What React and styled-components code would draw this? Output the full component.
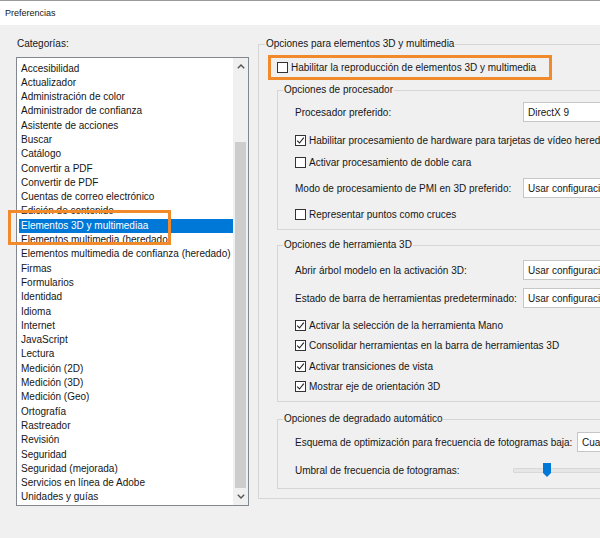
import React from "react";
import styled, { createGlobalStyle } from "styled-components";

const GlobalStyle = createGlobalStyle`
  html, body {
    margin: 0;
    padding: 0;
    background: #f0f0f0;
  }
  body {
    font-family: "Liberation Sans", Arial, sans-serif;
    font-size: 10px;
    color: #161616;
  }
`;

const Window = styled.div`
  width: 600px;
  height: 538px;
  overflow: hidden;
  display: flex;
  flex-direction: column;
  background: #f0f0f0;
`;

const TitleBar = styled.div`
  height: 25px;
  box-sizing: border-box;
  flex-shrink: 0;
  background: #fff;
  border-top: 1px solid #9a9a9a;
  padding-left: 5px;
  display: flex;
  align-items: center;
  font-size: 9px;
`;

const Content = styled.div`
  display: flex;
  align-items: flex-start;
  gap: 9px;
  padding: 12px 0 0 16px;
`;

const LeftColumn = styled.div`
  position: relative;
  width: 233px;
  flex-shrink: 0;
`;

const Caption = styled.div`
  line-height: 14px;
  padding-left: 1px;
`;

const ListBox = styled.div`
  margin-top: 6px;
  height: 449px;
  box-sizing: border-box;
  border: 1px solid #828790;
  background: #fff;
  display: flex;
`;

const Items = styled.ul`
  flex: 1;
  margin: 0;
  padding: 3.5px 0 0 2px;
  list-style: none;
  overflow: hidden;
`;

const Item = styled.li`
  height: 14.3px;
  line-height: 14.3px;
  padding-left: 2px;
  white-space: nowrap;
  background: ${(p) => (p.$selected ? "#0078d7" : "transparent")};
  color: ${(p) => (p.$selected ? "#fff" : "inherit")};
`;

const Scrollbar = styled.div`
  width: 15px;
  display: flex;
  flex-direction: column;
  background: #f0f0f0;
`;

const ArrowButton = styled.div`
  height: 17px;
  display: flex;
  align-items: center;
  justify-content: center;
`;

const Track = styled.div`
  flex: 1;
  display: flex;
  flex-direction: column;
  padding-top: 67px;
`;

const Thumb = styled.div`
  flex: 1;
  margin: 0 2px;
  background: #cdcdcd;
`;

const Annotation = styled.div`
  position: absolute;
  left: -8px;
  top: 173px;
  width: 163px;
  height: 35px;
  box-sizing: border-box;
  border: 3px solid #f08a2a;
  pointer-events: none;
`;

const RightColumn = styled.div`
  width: 440px;
  flex-shrink: 0;
`;

const Group = styled.fieldset`
  margin: ${(p) => p.$top || 0}px 0 0 0;
  padding: 0;
  min-width: 0;
  border: 1px solid #d5d5d5;
`;

const Legend = styled.legend`
  margin-left: ${(p) => p.$indent}px;
  padding: 0 1px;
  line-height: 14px;
  font-size: 10px;
`;

const GroupBody = styled.div`
  padding: ${(p) => p.$pad};
`;

const Highlight = styled.div`
  margin-left: -9px;
  width: 284px;
  height: 25px;
  box-sizing: border-box;
  border: 3px solid #f08a2a;
  display: flex;
  align-items: center;
  padding-left: 6px;
`;

const CheckRow = styled.label`
  display: flex;
  align-items: center;
  gap: 3px;
  height: 20px;
  margin-top: ${(p) => p.$top || 0}px;
  white-space: nowrap;
`;

const Box = styled.span`
  width: 11px;
  height: 11px;
  box-sizing: border-box;
  border: 1px solid #333;
  background: #fff;
  flex-shrink: 0;
  display: flex;
  align-items: center;
  justify-content: center;
`;

const FieldRow = styled.div`
  display: grid;
  grid-template-columns: ${(p) => p.$label}px 160px;
  align-items: center;
  height: 20px;
  margin-top: ${(p) => p.$top || 0}px;
  white-space: nowrap;
`;

const Select = styled.div`
  height: 20px;
  box-sizing: border-box;
  border: 1px solid #c6c6c6;
  background: #fff;
  padding-left: 4px;
  display: flex;
  align-items: center;
`;

const SliderTrack = styled.div`
  position: relative;
  height: 3px;
  background: #e6e6e6;
  border: 1px solid #d8d8d8;
  border-radius: 1px;
`;

const SliderThumb = styled.svg`
  position: absolute;
  left: 29px;
  top: -6px;
`;

const categories = [
  "Accesibilidad",
  "Actualizador",
  "Administración de color",
  "Administrador de confianza",
  "Asistente de acciones",
  "Buscar",
  "Catálogo",
  "Convertir a PDF",
  "Convertir de PDF",
  "Cuentas de correo electrónico",
  "Edición de contenido",
  "Elementos 3D y multimediaa",
  "Elementos multimedia (heredado)",
  "Elementos multimedia de confianza (heredado)",
  "Firmas",
  "Formularios",
  "Identidad",
  "Idioma",
  "Internet",
  "JavaScript",
  "Lectura",
  "Medición (2D)",
  "Medición (3D)",
  "Medición (Geo)",
  "Ortografía",
  "Rastreador",
  "Revisión",
  "Seguridad",
  "Seguridad (mejorada)",
  "Servicios en línea de Adobe",
  "Unidades y guías",
];

const Chevron = ({ up }) => (
  <svg width="8" height="5" viewBox="0 0 8 5">
    <path
      d={up ? "M0.8 4.2 L4 1 L7.2 4.2" : "M0.8 0.8 L4 4 L7.2 0.8"}
      fill="none"
      stroke="#555"
      strokeWidth="1.4"
    />
  </svg>
);

const Check = ({ checked, top, children }) => (
  <CheckRow $top={top}>
    <Box>
      {checked && (
        <svg width="9" height="9" viewBox="0 0 9 9">
          <path d="M1.2 4.6 L3.5 7 L7.8 1.6" fill="none" stroke="#222" strokeWidth="1.1" />
        </svg>
      )}
    </Box>
    {children}
  </CheckRow>
);

const Dropdown = ({ label, value, labelWidth = 228, top }) => (
  <FieldRow $label={labelWidth} $top={top}>
    <span>{label}</span>
    <Select>{value}</Select>
  </FieldRow>
);

export default function App() {
  return (
    <>
      <GlobalStyle />
      <Window>
        <TitleBar>Preferencias</TitleBar>
        <Content>
          <LeftColumn>
            <Caption>Categorías:</Caption>
            <ListBox>
              <Items>
                {categories.map((c) => (
                  <Item key={c} $selected={c === "Elementos 3D y multimediaa"}>
                    {c}
                  </Item>
                ))}
              </Items>
              <Scrollbar>
                <ArrowButton>
                  <Chevron up />
                </ArrowButton>
                <Track>
                  <Thumb />
                </Track>
                <ArrowButton>
                  <Chevron />
                </ArrowButton>
              </Scrollbar>
            </ListBox>
            <Annotation />
          </LeftColumn>

          <RightColumn>
            <Group>
              <Legend $indent={6}>Opciones para elementos 3D y multimedia</Legend>
              <GroupBody $pad="4px 0 9px 18px">
                <Highlight>
                  <Check>Habilitar la reproducción de elementos 3D y multimedia</Check>
                </Highlight>

                <Group $top={3}>
                  <Legend $indent={5}>Opciones de procesador</Legend>
                  <GroupBody $pad="0 0 5px 17px">
                    <Dropdown top={5} label="Procesador preferido:" value="DirectX 9" />
                    <Check checked top={8}>
                      Habilitar procesamiento de hardware para tarjetas de vídeo heredadas
                    </Check>
                    <Check top={2}>Activar procesamiento de doble cara</Check>
                    <Dropdown
                      top={6}
                      label="Modo de procesamiento de PMI en 3D preferido:"
                      value="Usar configuración de documento"
                    />
                    <Check top={6}>Representar puntos como cruces</Check>
                  </GroupBody>
                </Group>

                <Group $top={8}>
                  <Legend $indent={5}>Opciones de herramienta 3D</Legend>
                  <GroupBody $pad="0 0 5px 17px">
                    <Dropdown
                      top={8}
                      label="Abrir árbol modelo en la activación 3D:"
                      value="Usar configuración de anotación"
                    />
                    <Dropdown
                      top={8}
                      label="Estado de barra de herramientas predeterminado:"
                      value="Usar configuración de anotación"
                    />
                    <Check checked top={7}>Activar la selección de la herramienta Mano</Check>
                    <Check checked>Consolidar herramientas en la barra de herramientas 3D</Check>
                    <Check checked top={1}>Activar transiciones de vista</Check>
                    <Check checked>Mostrar eje de orientación 3D</Check>
                  </GroupBody>
                </Group>

                <Group $top={10}>
                  <Legend $indent={5}>Opciones de degradado automático</Legend>
                  <GroupBody $pad="0 0 8px 17px">
                    <Dropdown
                      top={6}
                      labelWidth={282}
                      label="Esquema de optimización para frecuencia de fotogramas baja:"
                      value="Cuadro delimitador"
                    />
                    <FieldRow $label={218} $top={8}>
                      <span>Umbral de frecuencia de fotogramas:</span>
                      <SliderTrack>
                        <SliderThumb width="8" height="14" viewBox="0 0 8 14">
                          <path d="M0 0 H8 V10 L4 14 L0 10 Z" fill="#0078d7" />
                        </SliderThumb>
                      </SliderTrack>
                    </FieldRow>
                  </GroupBody>
                </Group>
              </GroupBody>
            </Group>
          </RightColumn>
        </Content>
      </Window>
    </>
  );
}
